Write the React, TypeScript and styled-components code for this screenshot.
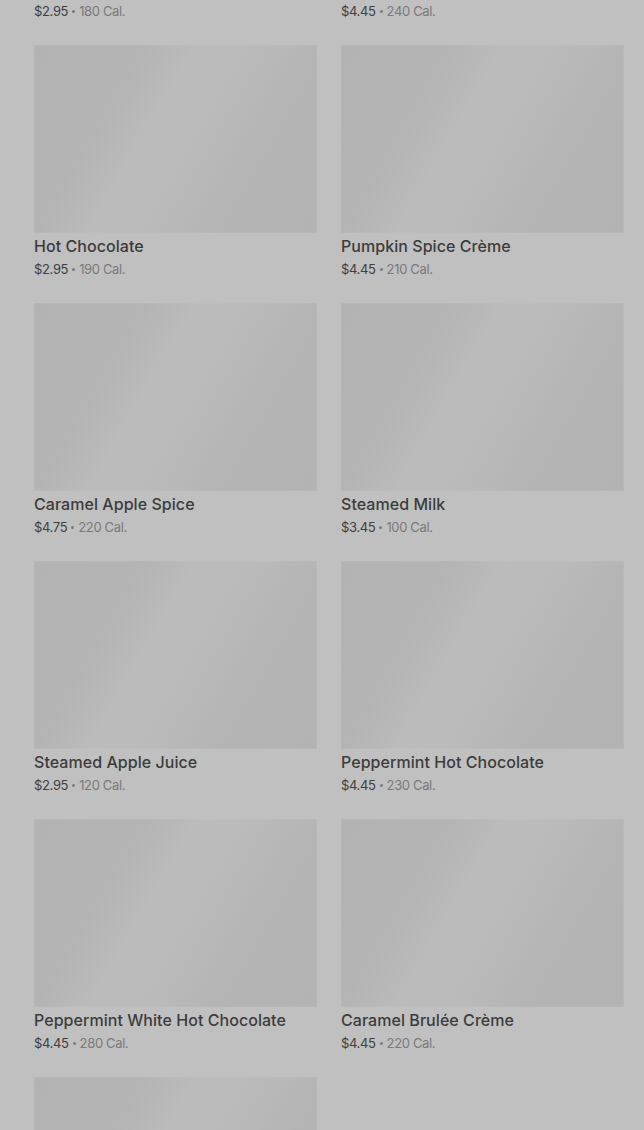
import React from "react";
import styled, { createGlobalStyle } from "styled-components";

const Global = createGlobalStyle`
  html, body { margin: 0; padding: 0; background: #c0c0c0; }
  body { overflow: hidden; font-family: Inter, "Noto Sans", sans-serif; }
`;

const Page = styled.div`
  height: 1130px;
  overflow: hidden;
  background: #c0c0c0;
`;

const Grid = styled.div`
  display: grid;
  grid-template-columns: 283px 283px;
  column-gap: 24px;
  row-gap: 25px;
  padding: 0 20px 0 34px;
  margin-top: -213px;
`;

const Card = styled.div`
  display: flex;
  flex-direction: column;
`;

const Thumb = styled.div`
  height: 188px;
  background: linear-gradient(
    120deg,
    #b3b3b3 0%,
    #b4b4b4 28%,
    #bbbbbb 42%,
    #bababa 58%,
    #b4b4b4 75%,
    #b3b3b3 100%
  );
  box-shadow: inset 0 0 0 1px rgba(255, 255, 255, 0.05);
`;

const Title = styled.div`
  margin-top: 3px;
  font-size: 16px;
  line-height: 20px;
  font-weight: 500;
  color: #3c3c3c;
  letter-spacing: 0.05px;
`;

const Meta = styled.div`
  margin-top: 4px;
  height: 18px;
  font-size: 13px;
  line-height: 18px;
  color: #7a7a7a;
  letter-spacing: -0.35px;
  white-space: nowrap;
`;

const Price = styled.span`
  color: #3f3f3f;
`;

const Dot = styled.span`
  display: inline-block;
  width: 3px;
  height: 3px;
  border-radius: 50%;
  background: #7a7a7a;
  vertical-align: middle;
  margin: 0 4px 0 4px;
  position: relative;
  top: -1px;
`;

const items = [
  { name: "White Hot Chocolate", price: "$2.95", cal: "180" },
  { name: "Chai Crème", price: "$4.45", cal: "240" },
  { name: "Hot Chocolate", price: "$2.95", cal: "190" },
  { name: "Pumpkin Spice Crème", price: "$4.45", cal: "210" },
  { name: "Caramel Apple Spice", price: "$4.75", cal: "220" },
  { name: "Steamed Milk", price: "$3.45", cal: "100" },
  { name: "Steamed Apple Juice", price: "$2.95", cal: "120" },
  { name: "Peppermint Hot Chocolate", price: "$4.45", cal: "230" },
  { name: "Peppermint White Hot Chocolate", price: "$4.45", cal: "280" },
  { name: "Caramel Brulée Crème", price: "$4.45", cal: "220" },
  { name: "Vanilla Crème", price: "$3.95", cal: "200" },
];

export default function App() {
  return (
    <Page>
      <Global />
      <Grid>
        {items.map((it) => (
          <Card key={it.name}>
            <Thumb />
            <Title>{it.name}</Title>
            <Meta>
              <Price>{it.price}</Price>
              <Dot />
              {it.cal} Cal.
            </Meta>
          </Card>
        ))}
      </Grid>
    </Page>
  );
}
